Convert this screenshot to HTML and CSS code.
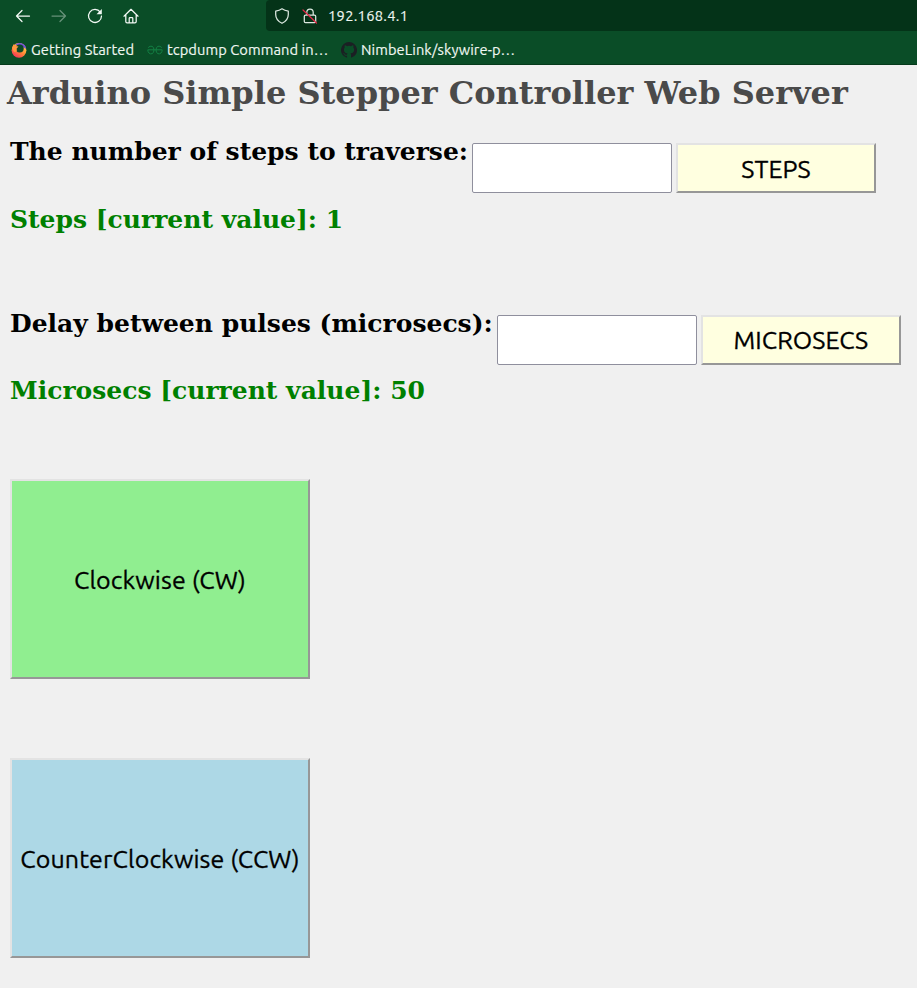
FILE: index.html
```html
<!DOCTYPE html>
<html lang="en">
<head>
<meta charset="utf-8">
<title>Arduino Simple Stepper Controller Web Server</title>
<link rel="stylesheet" href="styles.css">
</head>
<body>
<header class="browser">
  <div class="toolbar">
    <nav class="nav">
      <svg class="icon" viewBox="0 0 16 16"><path d="M14.500 8H1.500M7 2.500 1.500 8l5.500 5.500"/></svg>
      <svg class="icon dim" viewBox="0 0 16 16"><path d="M1 8h13.500M9 2.500l5.500 5.500-5.500 5.500"/></svg>
      <svg class="icon" viewBox="0 0 16 16"><path d="M13.300 4.200A6.500 6.500 0 1 0 14.500 8"/><path class="solid" d="M14.800 1v5.200H9.500z"/></svg>
      <svg class="icon home" viewBox="0 0 16 16"><path d="M1 8.200 8 1.300l7 6.900M2.800 7v6.500q0 1.300 1.300 1.300h7.800q1.300 0 1.300-1.300V7M6.200 14.500v-4q0-.8.8-.8h2q.8 0 .8.800v4"/></svg>
    </nav>
    <div class="address">
      <svg class="icon" viewBox="0 0 16 16"><path d="M8 .8c1.800 1.300 3.800 2 6.300 2.300v3.400c0 4-2.600 7-6.300 8.800-3.700-1.800-6.300-4.800-6.300-8.800V3.100C4.200 2.800 6.200 2.100 8 .8z"/></svg>
      <svg class="icon" viewBox="0 0 16 16"><path d="M4.800 7V4.200a3.200 3.200 0 0 1 6.400 0V7M3.500 7h9q1.200 0 1.200 1.200v5.300q0 1.200-1.200 1.200h-9q-1.200 0-1.200-1.200V8.200Q2.300 7 3.500 7z"/><path class="slash" d="M1 2l13.500 13"/></svg>
      <span class="url">192.168.4.1</span>
    </div>
  </div>
  <div class="bookmarks">
    <a class="bookmark first">
      <svg class="fav" viewBox="0 0 16 16">
        <defs><linearGradient id="flame" x1=".85" y1=".1" x2=".25" y2="1"><stop offset="0" stop-color="#ffe14d"/><stop offset=".5" stop-color="#ff8a35"/><stop offset="1" stop-color="#f52f5b"/></linearGradient></defs>
        <circle cx="8" cy="8.300" r="7.400" fill="url(#flame)"/>
        <path d="M4 2.500Q7 .2 10.500 1.200 15 3 15.300 7L12 5z" fill="#7550d8"/>
        <circle cx="8.700" cy="6.600" r="4" fill="#0c4a28"/>
        <path d="M1 6 2.500 2.200l2 1.800 3 .5-1.800 2 .2 3L3 10z" fill="#ff9640"/>
      </svg>
      <span>Getting Started</span>
    </a>
    <a class="bookmark second">
      <svg class="fav geek" viewBox="0 0 16 16"><path d="M.8 7.800h14.400M1.200 5.600Q3 3.600 5 4.300q2 .8 2 3.700t-2 3.700Q3.300 12.300 2 11 .8 9.800 .8 7.800M14.800 5.600Q13 3.600 11 4.300 9 5.100 9 8t2 3.700q1.700.6 3-.7 1.200-1.200 1.200-3.200"/></svg>
      <span>tcpdump Command in…</span>
    </a>
    <a class="bookmark third">
      <svg class="fav" viewBox="0 0 16 16"><path fill="#1b1f23" d="M8 0a8 8 0 0 0-2.530 15.590c.4.070.55-.17.550-.38v-1.490c-2.230.480-2.690-.95-2.690-.95-.36-.92-.89-1.170-.89-1.170-.73-.5.060-.49.060-.49.800.060 1.230.830 1.230.830.720 1.220 1.870.870 2.330.660.070-.52.280-.87.510-1.070-1.780-.2-3.640-.89-3.640-3.950 0-.87.310-1.590.820-2.150-.08-.2-.36-1.020.080-2.120 0 0 .67-.21 2.200.820a7.600 7.600 0 0 1 4 0c1.530-1.040 2.200-.82 2.200-.82.440 1.100.160 1.920.080 2.120.510.560.820 1.270.820 2.150 0 3.070-1.870 3.750-3.650 3.950.290.250.540.730.540 1.480v2.200c0 .21.150.460.550.380A8 8 0 0 0 8 0z"/></svg>
      <span>NimbeLink/skywire-p…</span>
    </a>
  </div>
</header>
<main class="page">
  <h1>Arduino Simple Stepper Controller Web Server</h1>
  <form class="row">
    <label for="steps">The number of steps to traverse:</label>
    <input id="steps" type="text">
    <button class="send lowered" type="button">STEPS</button>
  </form>
  <p class="value">Steps [current value]: 1</p>
  <form class="row delay">
    <label for="delay">Delay between pulses (microsecs):</label>
    <input id="delay" type="text">
    <button class="send" type="button">MICROSECS</button>
  </form>
  <p class="value second-value">Microsecs [current value]: 50</p>
  <button class="move lowered cw" type="button">Clockwise (CW)</button>
  <button class="move lowered ccw" type="button">CounterClockwise (CCW)</button>
</main>
</body>
</html>
```
FILE: styles.css
```css
* { box-sizing: border-box; }
body { margin: 0; background: #f0f0f0; height: 988px; overflow: hidden; font-family: "DejaVu Serif", serif; }
.browser { height: 65px; background: #0a4d27; border-bottom: 1px solid #053a1b; color: #f0f7f2; font: 14.67px/20px Ubuntu, "Noto Sans", sans-serif; -webkit-text-stroke: .15px; }
.toolbar { display: flex; height: 31px; }
.nav { width: 266px; padding: 0 0 0 15px; display: flex; align-items: center; gap: 20px; }
.icon { width: 16px; height: 16px; flex: none; fill: none; stroke: #f2f8f4; stroke-width: 1.25; stroke-linecap: round; stroke-linejoin: round; }
.icon .solid { fill: #f2f8f4; stroke: none; }
.icon .slash { stroke: #e32646; }
.home { margin-left: -.5px; }
.dim { opacity: .4; }
.address { flex: 1; background: #043318; border-radius: 4px 0 0 4px; display: flex; align-items: center; padding-left: 8px; }
.address .icon + .icon { margin-left: 12px; }
.address .icon { stroke: #dce8e0; }
.url { margin-left: 10px; white-space: nowrap; letter-spacing: .3px; }
.bookmarks { display: flex; height: 33px; padding: 5px 0 0 11px; align-items: center; }
.bookmark { display: flex; align-items: center; gap: 4px; white-space: nowrap; flex: none; letter-spacing: .08px; }
.first { width: 136px; }
.second { width: 194px; }
.fav { width: 16px; height: 16px; flex: none; }
.geek { fill: none; stroke: #138044; stroke-width: 1; }
h1 { margin: 0; padding: 9px 0 0 7px; font-size: 32px; line-height: 38px; color: #4a4a4a; white-space: nowrap; }
.row { display: flex; margin: 31px 0 0 10px; height: 50px; }
label { font-size: 25px; font-weight: bold; line-height: 30px; margin: -6px 4px 0 0; white-space: nowrap; }
input { width: 200px; height: 50px; margin: 0 4px 0 0; padding: 0; border: 1px solid #8f8f9d; border-radius: 2px; background: #fff; }
button { padding: 0; border: 2px solid; border-color: #e3e3e3 #979797 #979797 #e3e3e3; color: #000; font: 25px/30px Ubuntu, "Noto Sans", sans-serif; letter-spacing: .1px; -webkit-text-stroke: .3px; white-space: nowrap; }
.lowered { padding-top: 2px; }
.send { width: 200px; height: 50px; background: #ffffe0; }
.value { margin: 12px 0 0 10px; font-size: 25px; font-weight: bold; line-height: 30px; color: #008000; white-space: nowrap; }
.delay { margin-top: 80px; }
.second-value { margin-top: 11px; }
.move { display: block; width: 300px; height: 200px; margin-left: 10px; }
.cw { margin-top: 73px; background: #90ee90; }
.ccw { margin-top: 79px; background: #add8e6; }
```
